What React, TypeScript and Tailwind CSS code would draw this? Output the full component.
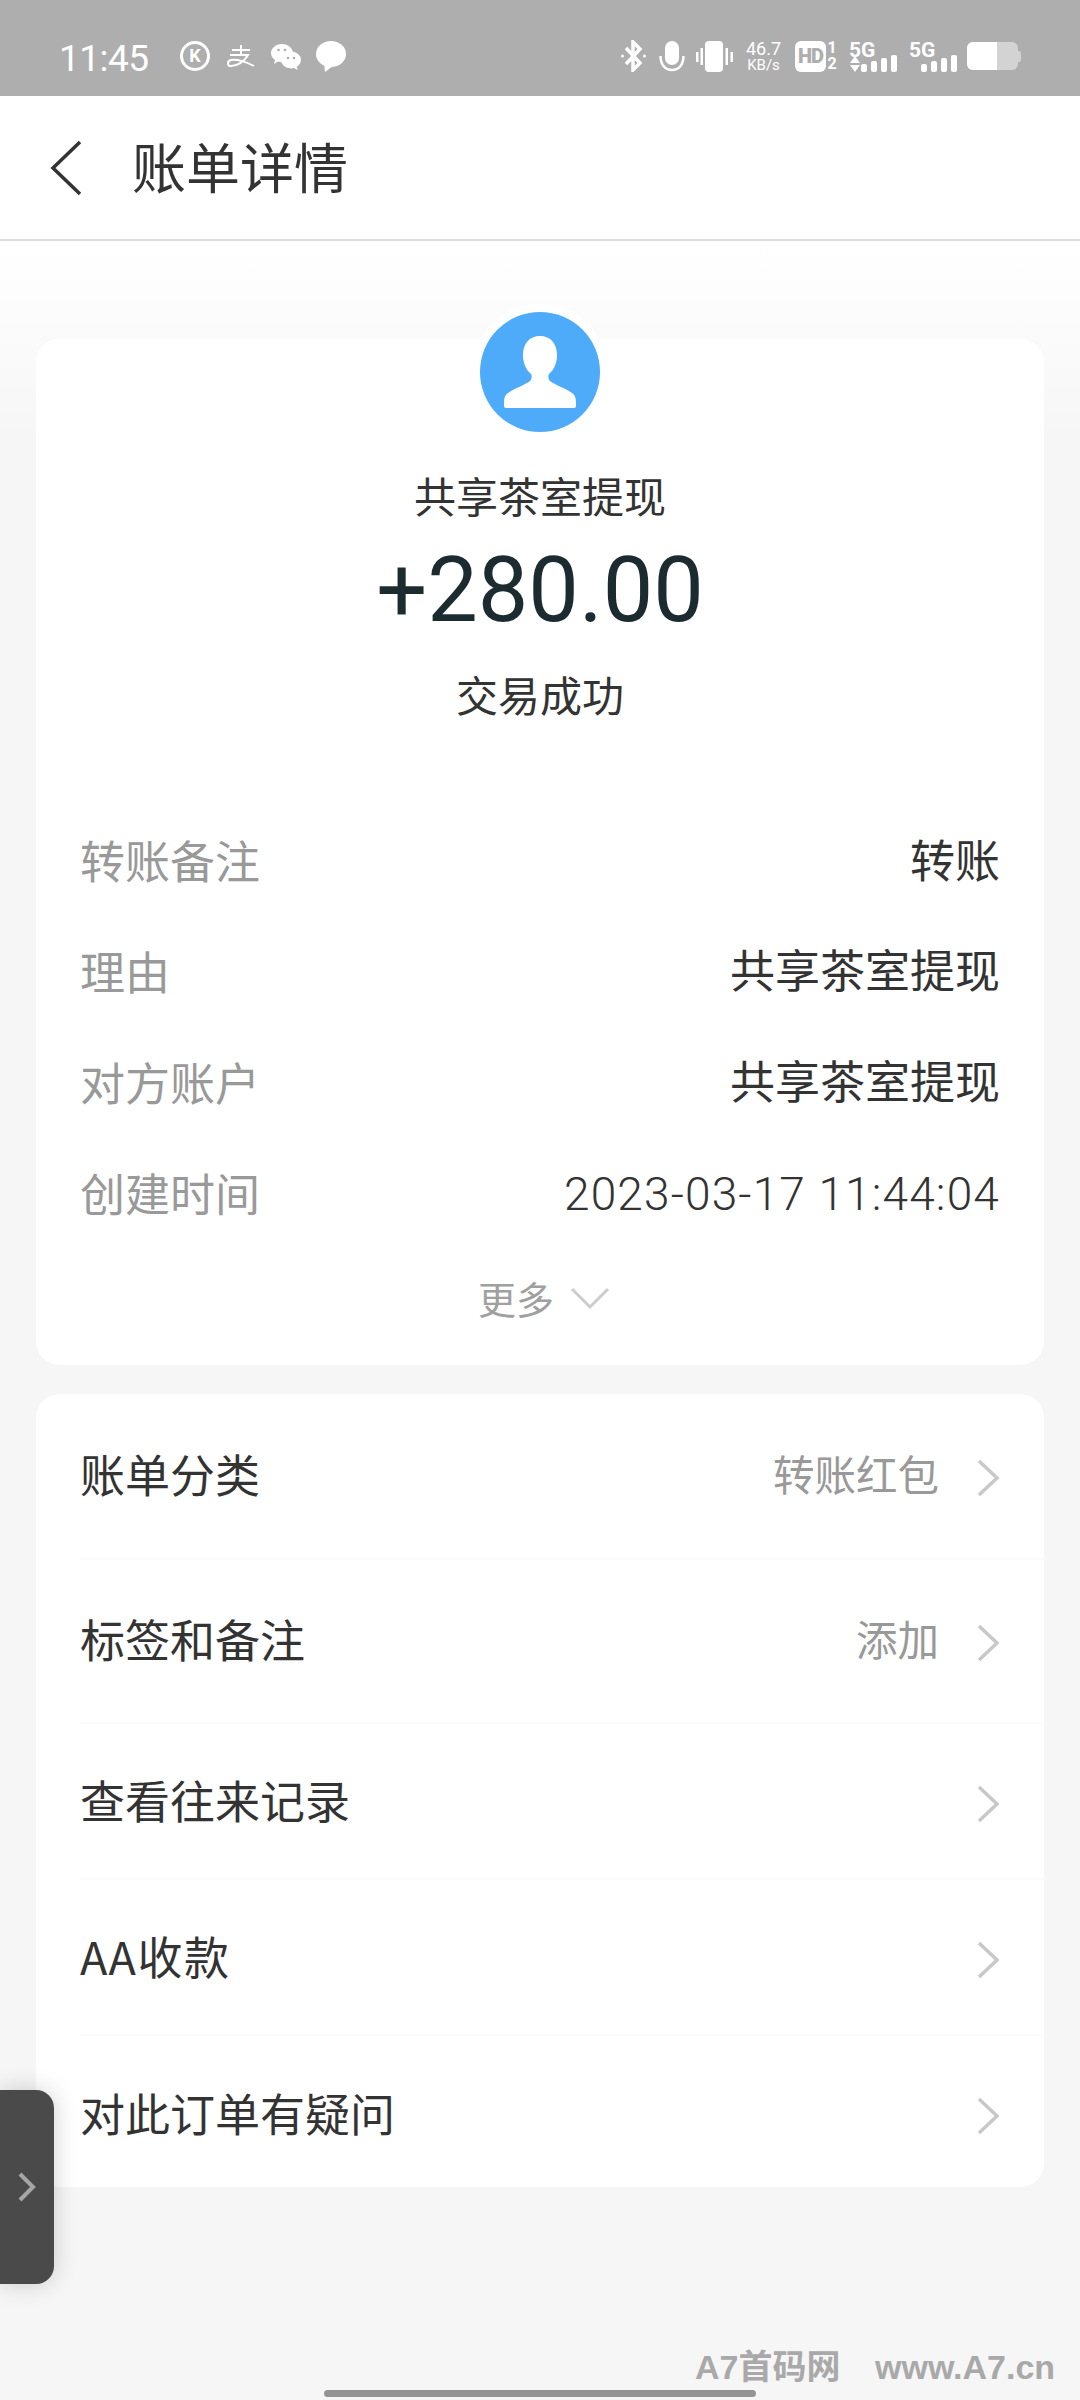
const cjk = 'font-["Noto_Sans_CJK_SC","Noto_Sans",sans-serif]';

const details = [
  { label: '转账备注', value: '转账', valueClass: 'mt-[3px] text-[45px]' },
  { label: '理由', value: '共享茶室提现', valueClass: 'mt-[2px] text-[45px]' },
  { label: '对方账户', value: '共享茶室提现', valueClass: 'mt-[2px] text-[45px]' },
  { label: '创建时间', value: '2023-03-17 11:44:04', valueClass: 'text-[46px] font-light tracking-[1.15px]' },
];

const actions = [
  { label: '账单分类', value: '转账红包', height: 'h-[166px]', nudge: 'mt-[4px]', textClass: 'mb-[6px]' },
  { label: '标签和备注', value: '添加', height: 'h-[164px]', nudge: 'mt-[4px]', textClass: 'mb-[6px]' },
  { label: '查看往来记录', value: '', height: 'h-[156px]', nudge: 'mt-[5px]', textClass: 'mb-[4px]' },
  { label: 'AA收款', value: '', height: 'h-[156px]', nudge: 'mt-[5px]', textClass: 'mb-[4px] tracking-[1.5px]' },
  { label: '对此订单有疑问', value: '', height: 'h-[151px]', nudge: 'mt-[8px]', textClass: 'mt-[2px]' },
];

function Chevron({ className }: { className: string }) {
  return (
    <svg width="24" height="38" viewBox="0 0 24 38" fill="none" className={`shrink-0 ${className}`}>
      <path d="M3 2 L21 19 L3 36" stroke="#c8c8c8" strokeWidth="3.500" />
    </svg>
  );
}

function StatusLeft() {
  return (
    <div className="flex items-center">
      <span className="-ml-[1px] mt-[4px] w-[121px] font-['Roboto',sans-serif] text-[37px] leading-none tracking-[-0.5px]">11:45</span>
      <div className="flex h-[30px] w-[30px] items-center justify-center rounded-full border-[3px] border-white font-['Roboto',sans-serif] text-[18px] font-bold leading-none">
        K
      </div>
      <svg width="28" height="24" viewBox="0 0 28 24" fill="none" stroke="white" strokeWidth="2" className="ml-[17px]">
        <path d="M5 6 H23" />
        <path d="M14 1 V11" />
        <path d="M3 11 H21 C17 18 10 22 4 22 C0 22 0 17 4 16 C10 15 20 18 27 22" />
      </svg>
      <svg width="30" height="28" viewBox="0 0 30 28" className="ml-[16px]" fill="white">
        <path d="M11 2C5 2 0 6 0 11c0 3 1.500 5 4 7l-1 4 4-2.500c1.500.5 3 .7 4 .7 0-6 5-10 11-10C21 5 16 2 11 2z" />
        <ellipse cx="20" cy="18" rx="10" ry="8.500" />
        <path d="M25 24l2 4-5-2.500z" />
        <circle cx="17" cy="16" r="1.300" fill="#aeaeae" />
        <circle cx="23" cy="16" r="1.300" fill="#aeaeae" />
        <circle cx="7.500" cy="8" r="1.300" fill="#aeaeae" />
        <circle cx="14" cy="8" r="1.300" fill="#aeaeae" />
      </svg>
      <svg width="30" height="31" viewBox="0 0 30 31" className="ml-[15px]" fill="white">
        <ellipse cx="15" cy="13" rx="15" ry="13" />
        <path d="M8 22l1 9 8-6z" />
      </svg>
    </div>
  );
}

function Signal({ up }: { up?: boolean }) {
  return (
    <div className="relative h-[31px] w-[48px]">
      <span className="absolute left-0 top-[-1px] font-['Roboto',sans-serif] text-[21px] font-bold leading-none">5G</span>
      {up && (
        <svg width="12" height="16" viewBox="0 0 12 16" fill="white" className="absolute bottom-0 left-0">
          <path d="M6 0l5 7H1zM1 9h10l-5 7z" />
        </svg>
      )}
      <div className="absolute bottom-0 right-0 flex items-end gap-[4px]">
        <div className="h-[8px] w-[6px] rounded-[2px] bg-white" />
        <div className="h-[11px] w-[6px] rounded-[2px] bg-white" />
        <div className="h-[14px] w-[6px] rounded-[2px] bg-white" />
        <div className="h-[17px] w-[6px] rounded-[2px] bg-white" />
      </div>
    </div>
  );
}

function StatusRight() {
  return (
    <div className="flex items-center">
      <svg width="27" height="32" viewBox="0 0 27 32" fill="none" stroke="white" strokeWidth="3.500">
        <path d="M6 8 L20 23 L13 30 V2 L20 9 L6 24" />
        <circle cx="2.500" cy="16" r="1.500" fill="white" stroke="none" />
        <circle cx="24.500" cy="16" r="1.500" fill="white" stroke="none" />
      </svg>
      <svg width="26" height="31" viewBox="0 0 26 31" fill="none" className="ml-[12px]">
        <rect x="6" y="0" width="14" height="24" rx="7" fill="white" />
        <path d="M1.500 15c0 9 5 14 11.500 14s11.500-5 11.500-14" stroke="white" strokeWidth="2.500" />
      </svg>
      <svg width="37" height="31" viewBox="0 0 37 31" fill="white" className="ml-[11px]">
        <rect x="9" y="0" width="18" height="31" rx="4" />
        <rect x="0" y="11" width="2.500" height="10" />
        <rect x="4.500" y="7" width="2.500" height="17" />
        <rect x="29.500" y="7" width="2.500" height="17" />
        <rect x="34.500" y="11" width="2.500" height="10" />
      </svg>
      <div className="ml-[11px] flex w-[39px] flex-col items-center font-['Roboto',sans-serif]">
        <span className="text-[18px] leading-[18px]">46.7</span>
        <span className="text-[15px] leading-[15px]">KB/s</span>
      </div>
      <div className="ml-[12px] flex h-[31px] w-[31px] items-center justify-center rounded-[6px] bg-white font-['Roboto',sans-serif] text-[20px] font-black leading-none tracking-[-1px] text-[#aeaeae]">
        HD
      </div>
      <div className="flex w-[12px] flex-col items-center font-['Roboto',sans-serif] text-[16px] font-bold leading-[16px]">
        <span>1</span>
        <span>2</span>
      </div>
      <div className="ml-[11px]">
        <Signal up />
      </div>
      <div className="ml-[12px]">
        <Signal />
      </div>
      <div className="ml-[10px] flex items-center">
        <div className="flex h-[28px] w-[51px] overflow-hidden rounded-[6px] bg-[#d3d3d3]">
          <div className="h-full w-[30px] bg-white" />
        </div>
        <div className="h-[11px] w-[3px] rounded-r-[2px] bg-[#d3d3d3]" />
      </div>
    </div>
  );
}

export default function App() {
  return (
    <div className={`${cjk} relative flex h-[2400px] w-[1080px] flex-col overflow-hidden bg-[#f6f6f6] text-[#333333]`}>
      <div className="flex h-[96px] shrink-0 items-center justify-between bg-[#aeaeae] pb-[2px] pl-[60px] pr-[59px] pt-[18px] text-white">
        <StatusLeft />
        <StatusRight />
      </div>

      <header className="flex h-[145px] shrink-0 items-center border-b-2 border-[#dddddd] bg-white pl-[50px]">
        <svg width="32" height="56" viewBox="0 0 32 56" fill="none">
          <path d="M30 2 L3 28 L30 54" stroke="#333333" strokeWidth="3.500" />
        </svg>
        <h1 className="ml-[50px] -mt-[3px] text-[54px] leading-none">账单详情</h1>
      </header>

      <main className="flex flex-1 flex-col gap-[29px] bg-[linear-gradient(to_bottom,#ffffff,#f6f6f6_200px)] px-[36px] pt-[98px]">
        <section className="flex h-[1026px] flex-col items-center rounded-[24px] bg-white">
          <div className="-mt-[35px] flex h-[136px] w-[136px] shrink-0 items-center justify-center rounded-full bg-white">
            <div className="flex h-[120px] w-[120px] items-center justify-center rounded-full bg-[#4eabf9]">
              <svg width="72" height="72" viewBox="0 0 72 72" fill="white">
                <path d="M36 0c-11 0-17 8-17 19 0 8 3 15 8 19 1 1 1 5-1 7-5 4-15 7-22 12-3 2-4 5-4 10v3c0 1 1 2 2 2h68c1 0 2-1 2-2v-3c0-5-1-8-4-10-7-5-17-8-22-12-2-2-2-6-1-7 5-4 8-11 8-19C53 8 47 0 36 0z" />
              </svg>
            </div>
          </div>
          <p className="mt-[25px] text-[42px] leading-[60px]">共享茶室提现</p>
          <p className="mt-[16px] font-['Roboto',sans-serif] text-[90px] leading-[100px] text-[#1b2b30]">+280.00</p>
          <p className="mt-[23px] text-[42px] leading-[60px]">交易成功</p>

          <dl className="mt-[81px] w-full px-[44px]">
            {details.map((row) => (
              <div key={row.label} className="flex h-[111px] items-center justify-between">
                <dt className="-mt-[3px] text-[45px] leading-none text-[#999999]">{row.label}</dt>
                <dd className={`font-['Roboto','Noto_Sans_CJK_SC',sans-serif] leading-none ${row.valueClass}`}>{row.value}</dd>
              </div>
            ))}
          </dl>

          <div className="ml-[8px] mt-[24px] flex items-center gap-[16px] text-[#a0a0a0]">
            <span className="text-[38px] leading-[50px]">更多</span>
            <svg width="40" height="24" viewBox="0 0 40 24" fill="none">
              <path d="M2 3 L20 21 L38 3" stroke="#cccccc" strokeWidth="3" />
            </svg>
          </div>
        </section>

        <section className="rounded-[24px] bg-white pl-[44px]">
          {actions.map((row, i) => (
            <div
              key={row.label}
              className={`flex items-center justify-between pr-[44px] ${row.height} ${i < actions.length - 1 ? 'border-b-2 border-[#fafafa]' : ''}`}
            >
              <span className={`text-[45px] leading-none ${row.textClass}`}>{row.label}</span>
              <div className="flex items-center gap-[37px]">
                {row.value && <span className="mb-[4px] text-[41.5px] leading-none text-[#999999]">{row.value}</span>}
                <Chevron className={row.nudge} />
              </div>
            </div>
          ))}
        </section>
      </main>

      {/* floating side tab */}
      <div className="absolute left-0 top-[2090px] flex h-[194px] w-[54px] items-center justify-end rounded-r-[18px] bg-[#4a4a4a] pr-[18px] shadow-[0_0_24px_rgba(0,0,0,0.18)]">
        <svg width="18" height="30" viewBox="0 0 18 30" fill="none">
          <path d="M2 2 L15 15 L2 28" stroke="#a6a6a6" strokeWidth="4" />
        </svg>
      </div>

      {/* watermark and home bar */}
      <div className="absolute left-[695px] top-[2349px] flex items-center font-['Liberation_Sans','Noto_Sans_CJK_SC',sans-serif] text-[34px] font-bold leading-[36px] text-[#a9a9a9]">
        <span className="w-[180px]">A7首码网</span>
        <span>www.A7.cn</span>
      </div>
      <div className="absolute left-[324px] top-[2390px] h-[7px] w-[432px] rounded-full bg-[#949494]" />
    </div>
  );
}
